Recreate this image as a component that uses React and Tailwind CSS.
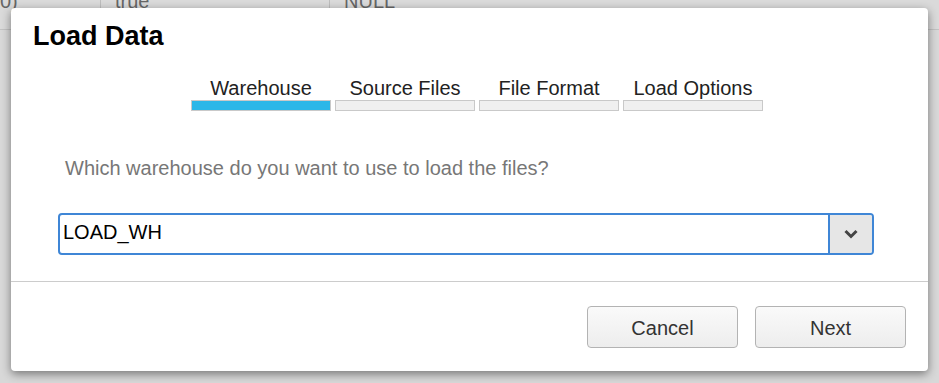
import React from "react";

const steps = ["Warehouse", "Source Files", "File Format", "Load Options"];

const StepBar = ({ label, active }) => (
  <div className="flex w-[140px] flex-col items-center">
    <span className="text-[20px] leading-[23px] text-[#222]">{label}</span>
    <div
      className={
        active
          ? "h-[11px] w-full border border-[#c9c9c9] bg-[#2bb7e8]"
          : "h-[11px] w-full border border-[#c9c9c9] bg-[#f0f0f0]"
      }
    />
  </div>
);

const App = () => {
  return (
    <div
      className="relative h-[383px] w-[939px] overflow-hidden bg-[#d8d8d8]"
      style={{ fontFamily: '"Liberation Sans", Arial, sans-serif' }}
    >
      {/* table row behind the dialog */}
      <div className="flex h-[30px] border-b border-[#c2c2c2] bg-[#dadada] text-[20px] leading-[20px] text-[#666]">
        <div className="w-[101px] border-r border-[#bdbdbd]">
          <span className="-mt-[9px] block">0)</span>
        </div>
        <div className="w-[229px] border-r border-[#bdbdbd] pl-[14px]">
          <span className="-mt-[9px] block">true</span>
        </div>
        <div className="pl-[14px]">
          <span className="-mt-[9px] block">NULL</span>
        </div>
      </div>

      {/* dialog */}
      <div className="absolute left-[11px] top-[8px] w-[917px] rounded-[4px] bg-white shadow-[0_3px_10px_rgba(0,0,0,0.45)]">
        <div className="px-[22px] pt-[13px]">
          <h2 className="text-[27px] font-bold leading-[31px] text-black">
            Load Data
          </h2>
        </div>

        <div className="mt-[25px] flex gap-[4px] pl-[180px]">
          {steps.map((s, i) => (
            <StepBar key={s} label={s} active={i === 0} />
          ))}
        </div>

        <p className="mt-[46px] pl-[54px] text-[20px] leading-[23px] text-[#777]">
          Which warehouse do you want to use to load the files?
        </p>

        <div className="ml-[47px] mt-[33px] flex h-[42px] w-[816px] overflow-hidden rounded-[4px] border-2 border-[#3f86d6]">
          <div className="flex-1 pl-[3px] pt-[6px] text-[20px] leading-[23px] text-black">
            LOAD_WH
          </div>
          <div className="flex w-[44px] items-center justify-center border-l-2 border-[#3f86d6] bg-[#e6e6e6]">
            <svg width="16" height="12" viewBox="0 0 16 12">
              <path
                d="M2.5 3 L8 8.5 L13.5 3"
                fill="none"
                stroke="#444"
                strokeWidth="3"
                strokeLinecap="butt"
              />
            </svg>
          </div>
        </div>

        <div className="mt-[26px] border-t border-[#cccccc]" />

        <div className="flex justify-end gap-[17px] pb-[23px] pr-[22px] pt-[24px]">
          <button className="h-[42px] w-[151px] rounded-[4px] border border-[#b3b3b3] bg-gradient-to-b from-[#fafafa] to-[#ededed] pt-[1px] text-[20px] text-[#333]">
            Cancel
          </button>
          <button className="h-[42px] w-[151px] rounded-[4px] border border-[#b3b3b3] bg-gradient-to-b from-[#fafafa] to-[#ededed] pt-[1px] text-[20px] text-[#333]">
            Next
          </button>
        </div>
      </div>
    </div>
  );
};

export default App;
